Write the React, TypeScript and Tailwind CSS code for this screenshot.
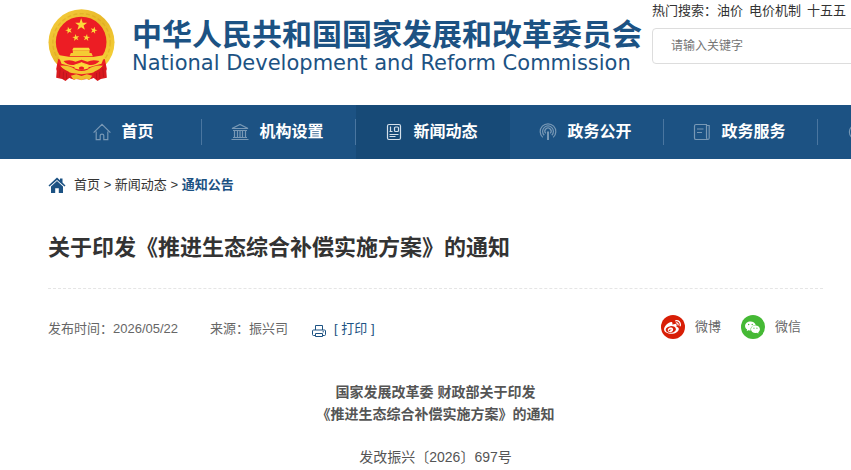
import type { ReactNode } from "react";
import { AiFillWechat } from "react-icons/ai";
import { FaWeibo } from "react-icons/fa";

const hotWords = ["油价", "电价机制", "十五五"];

const STAR = "0,-10 2.4,-3.2 9.5,-3.1 3.8,1.2 5.9,8.1 0,4 -5.9,8.1 -3.8,1.2 -9.5,-3.1 -2.4,-3.2";

function Star({ x, y, scale, rotate = 0 }: { x: number; y: number; scale: number; rotate?: number }) {
  return <polygon points={STAR} transform={`translate(${x} ${y}) rotate(${rotate}) scale(${scale})`} />;
}

function Emblem() {
  return (
    <svg viewBox="0 0 200 216" className="h-[72px] w-[67px] shrink-0" role="img" aria-label="国徽">
      <defs>
        <linearGradient id="gold" x1="0" y1="0" x2="1" y2="1">
          <stop offset="0" stopColor="#f6cf3c" />
          <stop offset="0.5" stopColor="#e8b82a" />
          <stop offset="1" stopColor="#f9d83c" />
        </linearGradient>
      </defs>
      <circle cx="100" cy="100" r="99" fill="url(#gold)" />
      <circle cx="100" cy="100" r="86" fill="none" stroke="#d49a1c" strokeWidth="4" strokeDasharray="12 7" opacity="0.4" />
      <circle cx="99" cy="99" r="76" fill="#ec1d24" />
      <g fill="#fcd93a">
        <Star x={99} y={47} scale={1.9} />
        <Star x={62} y={64} scale={1.1} rotate={-15} />
        <Star x={137} y={64} scale={1.1} rotate={15} />
        <Star x={83} y={86} scale={1.1} rotate={-8} />
        <Star x={115} y={86} scale={1.1} rotate={8} />
        <path d="M76 116h46l4 8H72z" />
        <path d="M74 124h50v10H74zM68 132h62l4 10H64z" fill="#f5cb33" />
      </g>
      {/* red drapery under the wreath */}
      <path d="M30 150q70 24 140 0l6 30q-6 26-76 32-70-6-76-32z" fill="#ec1d24" />
      <path d="M30 138l36 6h68l36-6-10 26q-60 22-120 0z" fill="#f7d038" />
      <path d="M46 156q22-6 36 2l18-6 18 6q14-8 36-2-12 14-30 12l-24-8-24 8q-18 2-30-12z" fill="#ec1d24" />
      <path d="M78 178l4-11 8 1 10-8 10 8 8-1 4 11q-22 8-44 0z" fill="#fcd93a" />
      <path d="M36 170q28-2 46 12 18 8 36 0 18-14 46-12l-14 16q-50 20-100 0z" fill="#f3c631" />
      <path d="M92 176q8-7 16 0l-2 6H94z" fill="#ec1d24" />
      <path d="M60 190q40 18 80 0l4 14-22 8-14-8H92l-14 8-22-8z" fill="#e01b22" />
      <path d="M68 200l16-4 16 5 16-5 16 4-8 12-14-3-10 5-10-5-14 3z" fill="#f0bd2c" />
      <path d="M29 162q-4 22-5 44l18 4 10 6 12-10-2-18q-22-8-33-26z" fill="#d9191f" />
      <path d="M171 162q4 22 5 44l-18 4-10 6-12-10 2-18q22-8 33-26z" fill="#d9191f" />
      <path
        d="M36 178l-2 26M46 188l-1 22M55 192v18M164 178l2 26M154 188l1 22M145 192v18"
        stroke="#b01319"
        strokeWidth="2"
      />
    </svg>
  );
}

function NavIcon({ children, bright = false }: { children: ReactNode; bright?: boolean }) {
  return (
    <svg
      viewBox="0 0 18 18"
      className={`size-[18px] shrink-0 ${bright ? "text-[#d5e0ea]" : "text-[#7898b5]"}`}
      fill="none"
      stroke="currentColor"
      strokeWidth="1.2"
      aria-hidden="true"
    >
      {children}
    </svg>
  );
}

const navItems = [
  {
    label: "首页",
    icon: (
      <NavIcon>
        <path d="M.6 9.6L9 1.4l8.4 8.2M3.2 8.6v8h4v-4.2q0-1.2 1.8-1.2t1.8 1.2v4.2h4v-8" />
      </NavIcon>
    ),
  },
  {
    label: "机构设置",
    icon: (
      <NavIcon>
        <path d="M1 5.500l8-4 8 4zM2 7.500h14M3.500 8v7M6.500 8v7M9 8v7M11.500 8v7M14.500 8v7M2 14.500h14M.5 16.500h17" />
      </NavIcon>
    ),
  },
  {
    label: "新闻动态",
    active: true,
    icon: (
      <NavIcon bright>
        <rect x="2.500" y="1.500" width="13" height="15" rx="1.500" />
        <path d="M5.500 3.500v5M4.500 8.500h3M4.500 11.500h9M4.500 13.500h6" />
        <rect x="9.500" y="4" width="4" height="4.500" rx="1" />
      </NavIcon>
    ),
  },
  {
    label: "政务公开",
    icon: (
      <NavIcon>
        <path d="M3.8 14.4a7.8 7.8 0 1 1 10.4 0M5.2 12.2a5.4 5.4 0 1 1 7.6 0M6.8 10.4a3.1 3.1 0 1 1 4.4 0" />
        <path d="M9 8.500V17" strokeWidth="2" />
      </NavIcon>
    ),
  },
  {
    label: "政务服务",
    icon: (
      <NavIcon>
        <path d="M3 1.500h10.500v13q0 2 1.400 2H3q-1.500 0-1.500-1.600V3Q1.500 1.500 3 1.500zM13.500 2.500h2.700v12.500q0 1.500-1.500 1.500M4 6h6.500M4 9.500h5" />
      </NavIcon>
    ),
  },
];

export default function App() {
  return (
    <div className="min-h-screen overflow-hidden bg-white font-['Liberation_Sans','Noto_Sans_CJK_SC',sans-serif] text-[13px] leading-5 text-[#333]">
      <header className="flex pt-[9px] pb-6 pl-12">
        <Emblem />
        <div className="ml-[17px] shrink-0 pt-[10px] whitespace-nowrap text-[#1c5283]">
          <p className="text-[30px] leading-8 font-bold">中华人民共和国国家发展和改革委员会</p>
          <p className="font-['DejaVu_Sans',sans-serif] text-[21px] leading-6">
            National Development and Reform Commission
          </p>
        </div>
        <div className="-mt-2 ml-[10px] flex-1 whitespace-nowrap">
          <div className="flex">
            <span>热门搜索：</span>
            <div className="flex gap-1.5">
              {hotWords.map((word) => (
                <a key={word} href="#">
                  {word}
                </a>
              ))}
            </div>
          </div>
          <form className="mt-[7px]">
            <input
              type="search"
              aria-label="搜索"
              placeholder="请输入关键字"
              className="h-9 w-60 rounded border border-[#ddd] px-[18px] text-xs outline-none placeholder:text-[#757575]"
            />
          </form>
        </div>
      </header>

      <nav className="bg-[#1c5283] pl-12">
        <ul className="flex">
          {navItems.map((item) => (
            <li key={item.label} className={`shrink-0 py-[14px] ${item.active ? "bg-[#174a77]" : ""}`}>
              <a
                href="#"
                className={`flex h-[26px] w-[154px] items-center justify-center gap-[10px] border-r pr-[2px] text-base font-bold whitespace-nowrap text-white ${
                  item.active ? "border-transparent" : "border-[#4a76a0]"
                }`}
              >
                {item.icon}
                {item.label}
              </a>
            </li>
          ))}
          <li className="shrink-0 py-[14px]">
            <a href="#" aria-label="互动交流" className="flex h-[26px] items-center px-[30px]">
              <NavIcon>
                <circle cx="9" cy="9" r="7.600" />
              </NavIcon>
            </a>
          </li>
        </ul>
      </nav>

      <main className="pr-7 pl-12">
        <div className="flex items-center gap-2 pt-4">
          <svg viewBox="0 0 18 16" className="h-4 w-[18px] text-[#1c5283]" fill="currentColor" aria-hidden="true">
            <path d="M9 .5l3 2.700V1.500h2.500v3.900L17.500 8.400l-1 1L9 2.900 1.500 9.400l-1-1z" />
            <path d="M9 4l6 5.400V16h-4.200v-4.800H7.200V16H3V9.400z" />
          </svg>
          <p>
            <a href="#">首页</a> &gt; <a href="#">新闻动态</a> &gt;{" "}
            <a href="#" className="font-bold text-[#1c5283]">
              通知公告
            </a>
          </p>
        </div>

        <h1 className="mt-[37px] border-b border-dashed border-[#e5e5e5] pb-6 text-[22px] leading-8 font-bold">
          关于印发《推进生态综合补偿实施方案》的通知
        </h1>

        <div className="flex items-start justify-between pt-[26px] text-[#666]">
          <div className="flex items-center pt-1">
            <span>发布时间：2026/05/22</span>
            <span className="ml-8">来源：振兴司</span>
            <button type="button" className="ml-6 flex items-center gap-2 text-[#1c5283]">
              <svg viewBox="0 0 14 14" className="mt-1 size-[14px]" fill="none" stroke="currentColor" aria-hidden="true">
                <path d="M3.500 6V1.500h7V6M3 11.500H1.500q-1 0-1-1V7q0-1 1-1h11q1 0 1 1v3.500q0 1-1 1H11" />
                <path d="M3.500 9.500h7v3h-7zM10.500 7.800h1.500" />
              </svg>
              [ 打印 ]
            </button>
          </div>
          <div className="flex gap-5 pr-[22px]">
            <a href="#" className="flex items-center gap-[10px]">
              <span className="flex size-6 items-center justify-center rounded-full bg-[#d81e06] text-white">
                <FaWeibo size={17} />
              </span>
              微博
            </a>
            <a href="#" className="flex items-center gap-[10px]">
              <span className="flex size-6 items-center justify-center rounded-full bg-[#45b935] text-white">
                <AiFillWechat size={17} />
              </span>
              微信
            </a>
          </div>
        </div>

        <article className="pt-[42px] text-center text-sm leading-[22px] text-[#555]">
          <p className="font-bold">
            国家发展改革委 财政部关于印发
            <br />
            《推进生态综合补偿实施方案》的通知
          </p>
          <p className="mt-[21px]">发改振兴〔2026〕697号</p>
        </article>
      </main>
    </div>
  );
}
